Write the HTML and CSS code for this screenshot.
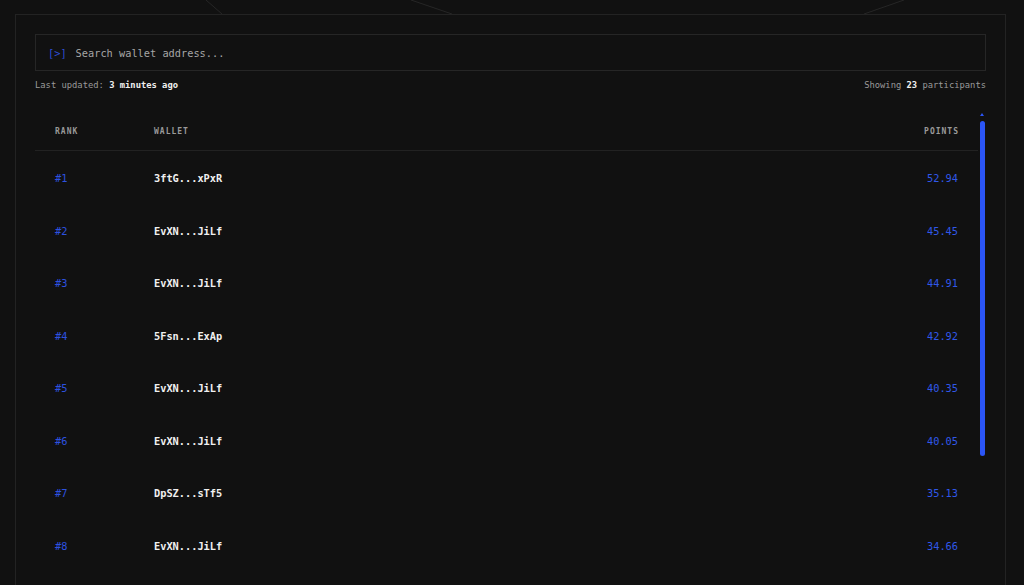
FILE: index.html
```html
<!DOCTYPE html>
<html lang="en">
<head>
<meta charset="utf-8">
<title>Leaderboard</title>
<link rel="stylesheet" href="styles.css">
</head>
<body>
<svg class="deco" width="1024" height="15" viewBox="0 0 1024 15" aria-hidden="true">
  <line x1="206" y1="0" x2="222" y2="14" />
  <line x1="411" y1="0" x2="452" y2="14" />
  <line x1="904" y1="0" x2="864" y2="14" />
</svg>
<main class="card">
  <div class="search">
    <span class="prompt">[&gt;]</span>
    <span class="placeholder">Search wallet address...</span>
  </div>
  <div class="meta">
    <span>Last updated: <b>3 minutes ago</b></span>
    <span>Showing <b>23</b> participants</span>
  </div>
  <div class="board">
    <div class="list">
      <div class="row head">
        <span>RANK</span><span>WALLET</span><span class="right">POINTS</span>
      </div>
      <div class="rows">
        <div class="row"><span class="rank">#1</span><span class="wallet">3ftG...xPxR</span><span class="pts">52.94</span></div>
        <div class="row"><span class="rank">#2</span><span class="wallet">EvXN...JiLf</span><span class="pts">45.45</span></div>
        <div class="row"><span class="rank">#3</span><span class="wallet">EvXN...JiLf</span><span class="pts">44.91</span></div>
        <div class="row"><span class="rank">#4</span><span class="wallet">5Fsn...ExAp</span><span class="pts">42.92</span></div>
        <div class="row"><span class="rank">#5</span><span class="wallet">EvXN...JiLf</span><span class="pts">40.35</span></div>
        <div class="row"><span class="rank">#6</span><span class="wallet">EvXN...JiLf</span><span class="pts">40.05</span></div>
        <div class="row"><span class="rank">#7</span><span class="wallet">DpSZ...sTf5</span><span class="pts">35.13</span></div>
        <div class="row"><span class="rank">#8</span><span class="wallet">EvXN...JiLf</span><span class="pts">34.66</span></div>
      </div>
    </div>
    <div class="scrollbar" aria-hidden="true">
      <div class="arrow"></div>
      <div class="thumb"></div>
    </div>
  </div>
</main>
</body>
</html>
```

FILE: styles.css
```css
html, body {
  margin: 0;
  padding: 0;
  background: #111111;
  color: #e6e6e6;
  font-family: "DejaVu Sans Mono", "Liberation Mono", monospace;
  overflow: hidden;
}

body {
  position: relative;
  padding: 14px 18px 0 15px;
  height: 585px;
  box-sizing: border-box;
}

.deco {
  position: absolute;
  left: 0;
  top: 0;
}

.deco line {
  stroke: #262626;
  stroke-width: 1;
}

.card {
  border: 1px solid #232323;
  border-bottom: none;
  background: #111111;
  padding: 19px 19px 0 19px;
  height: 571px;
  box-sizing: border-box;
  overflow: hidden;
}

.search {
  height: 37px;
  box-sizing: border-box;
  border: 1px solid #262626;
  display: flex;
  align-items: center;
  gap: 9px;
  padding: 0 12px;
  font-size: 10.3px;
}

.prompt {
  color: #2f4fd6;
}

.placeholder {
  color: #a6a6a6;
}

.meta {
  display: flex;
  justify-content: space-between;
  font-size: 8.8px;
  line-height: 14px;
  margin: 7px 0 16px;
  color: #9a9a9a;
}

.meta b {
  color: #f0f0f0;
  font-weight: bold;
}

.board {
  display: flex;
  align-items: flex-start;
}

.list {
  flex: 1;
  min-width: 0;
}

.rows {
  padding-top: 1px;
}

.row {
  display: grid;
  grid-template-columns: 99px 1fr auto;
  align-items: center;
  padding: 0 20px;
  height: 52.5px;
  font-size: 10.3px;
}

.row.head {
  height: 43px;
  box-sizing: border-box;
  padding-top: 5px;
  border-bottom: 1px solid #222222;
  font-size: 8px;
  font-weight: bold;
  letter-spacing: 1px;
  color: #9a9a9a;
}

.right {
  text-align: right;
  margin-right: -1px;
}

.rank {
  color: #2d52e0;
}

.wallet {
  color: #f0f0f0;
  font-weight: bold;
}

.pts {
  text-align: right;
  color: #3058ea;
}

.scrollbar {
  width: 8px;
  display: flex;
  flex-direction: column;
  align-items: center;
  padding-top: 5px;
}

.arrow {
  width: 0;
  height: 0;
  border-left: 2.5px solid transparent;
  border-right: 2.5px solid transparent;
  border-bottom: 3px solid #2b55f6;
}

.thumb {
  margin-top: 5px;
  width: 5px;
  height: 335px;
  border-radius: 3px;
  background: #2b55f6;
}
```
